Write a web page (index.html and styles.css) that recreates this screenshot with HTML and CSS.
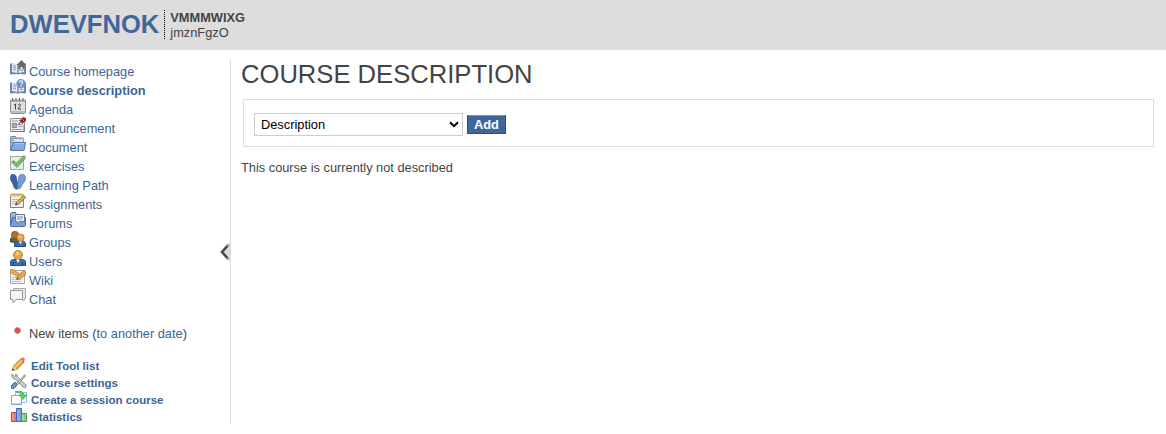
FILE: index.html
```html
<!DOCTYPE html>
<html lang="en">
<head>
<meta charset="utf-8">
<title>Course description</title>
<link rel="stylesheet" href="styles.css">
</head>
<body>
<header class="banner">
  <a class="site">DWEVFNOK</a>
  <div class="course"><b>VMMMWIXG</b><span>jmznFgzO</span></div>
</header>
<div class="page">
  <aside class="sidebar">
    <ul class="tools">
      <li><svg viewBox="0 0 16 16"><path d="M0 3.500h1.500l6 1 7-1H16v11l-7-.5-1 1-1-1-7 .5z" fill="#6b86b2"/><path d="M2 3l5.300 1.500V13L2 12zM8.700 4.500L14 3v9l-5.300 1z" fill="#e6ebf4"/><path d="M3 5.500l3 .5M3 7.500l3 .5M3 9.500l3 .5M10 10.500h3" stroke="#8a99b3"/><path d="M6.500 5L11.500 0 16 5h-1.500v4.500h-2V7h-2v2.500h-2V5z" fill="#686868"/></svg><a>Course homepage</a></li>
      <li class="active"><svg viewBox="0 0 16 16"><path d="M0 3.500h1.500l6 1 7-1H16v11l-7-.5-1 1-1-1-7 .5z" fill="#6b86b2"/><path d="M2 3l5.300 1.500V13L2 12zM8.700 4.500L14 3v9l-5.300 1z" fill="#e6ebf4"/><path d="M3 5.500l3 .5M3 7.500l3 .5M3 9.500l3 .5M10 10.500h3" stroke="#8a99b3"/><circle cx="11" cy="4.700" r="4.700" fill="#6f93c8"/><path d="M9.300 3.300Q9.500 1.800 11 1.800T12.700 3.300Q12.500 4.300 11 5M11 6.300v1.500" fill="none" stroke="#f2f6fc" stroke-width="1.200"/></svg><a>Course description</a></li>
      <li><svg viewBox="0 0 16 16"><path d="M.5 2h15v12.500l-1 1h-13l-1-1z" fill="#dedede" stroke="#8e8e8e"/><path d="M1 2.500h14v1.500H1z" fill="#aaa"/><path d="M1 14h14" stroke="#999"/><path d="M2.500 0v3M6 0v3M9.500 0v3M13 0v3" stroke="#666"/><path d="M4 7l1.500-1v5.500M8 7q1.500-2 2.500-.3 0 1-2.500 4.300H11" fill="none" stroke="#444"/></svg><a>Agenda</a></li>
      <li><svg viewBox="0 0 16 16"><path d="M.5 1.500h14v13H.500z" fill="#eee" stroke="#929292"/><path d="M1 14.500h13V8" fill="none" stroke="#777"/><path d="M2 4h6M2 12.500h10M8.500 7.500h4M8.500 9.500h4" stroke="#999"/><path d="M2.500 6.500h4v4h-4z" fill="#aaa" stroke="#888"/><path d="M8 8l3-3.500" stroke="#444"/><path d="M9 3l2-.5L13 0l3 1v3l-2 1-1.500 2z" fill="#a51f29"/><path d="M12 2l2 2" stroke="#e0656c"/></svg><a>Announcement</a></li>
      <li><svg viewBox="0 0 16 16"><path d="M.5 14V1l1-.5h4l1 1.500h6.500v3" fill="#b3b8c1" stroke="#78859a"/><path d="M3 2.500h10.500v6H3z" fill="#dde2e9" stroke="#929eae"/><path d="M3.500 6.500h12l-1.500 8H.700z" fill="#86abdc" stroke="#4d76b0"/><path d="M4.500 7.500H14" stroke="#acc9ec"/></svg><a>Document</a></li>
      <li><svg viewBox="0 0 16 16"><path d="M.5 1.500h13v13H.500z" fill="#ececec" stroke="#a4a4a4"/><path d="M1.500 7l2-1.500 3 2.500L14 .5l2 2L7 12.500z" fill="#79bd6e" stroke="#509e4b" stroke-width=".8"/></svg><a>Exercises</a></li>
      <li><svg viewBox="0 0 16 16"><path d="M1 1C3-.5 6 .5 6.500 4l1.500 8q0 4-2.300 3.200Q3.500 14 3 10-1 5 1 1z" fill="#3d649e" stroke="#29538c" stroke-width=".7"/><path d="M10 1c3-2 6 0 5.500 4-.5 3-3 4-4 7-.5 2-2 3.500-3.500 2.500-1-1 0-4 .5-7C8.500 4 8.500 2 10 1z" fill="#759ed2" stroke="#4a73ab" stroke-width=".7"/></svg><a>Learning Path</a></li>
      <li><svg viewBox="0 0 16 16"><path d="M.5 1.500h13v13H.500z" fill="#f1f1f1" stroke="#808080"/><path d="M0 1h14v2.500H0z" fill="#dfc55f"/><path d="M2 0v2M4 0v2M6 0v2M8 0v2M10 0v2M12 0v2" stroke="#927d3b" stroke-width=".6"/><path d="M2 6.500h7M2 8.500h5M2 10.500h4" stroke="#bbb"/><path d="M5.500 12l1-3L14 2.500l1.800 2L8.500 11z" fill="#dfb45a" stroke="#76551f" stroke-width=".8"/><path d="M5.500 12l.7-2 1.200 1.300z" fill="#333"/></svg><a>Assignments</a></li>
      <li><svg viewBox="0 0 16 16"><path d="M.5 14V1.500l1-1h4l1 2h8v10" fill="#9db8df" stroke="#586f93"/><path d="M.5 13.500l2-8h13v8l-1 1H1z" fill="#799fd3" stroke="#4b6a9b"/><path d="M5.500 2.500h9v7H10l-3 2v-2H5.500z" fill="#e8edf5" stroke="#667a99"/><path d="M7 5h6M7 7h5" stroke="#7a8fae"/></svg><a>Forums</a></li>
      <li><svg viewBox="0 0 16 16"><path d="M.5 11V8l2-2h6l2 2v3.500z" fill="#536b45" stroke="#4b3e25"/><circle cx="5" cy="4" r="3.700" fill="#b0702c" stroke="#84501c" stroke-width=".7"/><path d="M4.500 15.500V12l2-2h7l2 2v3.500z" fill="#396cb0" stroke="#29457a"/><circle cx="10.500" cy="6.800" r="3.700" fill="#e6a351" stroke="#aa6826" stroke-width=".7"/><path d="M9 10.500h3l-1.500 3z" fill="#eef3fa"/><circle cx="10" cy="5.500" r="1.500" fill="#f8c681"/></svg><a>Groups</a></li>
      <li><svg viewBox="0 0 16 16"><path d="M.5 15.500v-4q.5-2 3-2h9q2.500 0 3 2v4z" fill="#3c6fb5" stroke="#294c84"/><path d="M3.500 12v3.500M12.500 12v3.500" stroke="#24457b"/><circle cx="8" cy="5" r="4.500" fill="#e6a24c" stroke="#ad6c27" stroke-width=".8"/><path d="M6 9.500h4L8 13z" fill="#f8faff"/><circle cx="7.500" cy="3.500" r="2" fill="#f7c680"/></svg><a>Users</a></li>
      <li><svg viewBox="0 0 16 16"><path d="M.5 1.500h14v13H.500z" fill="#f1f1f1" stroke="#a6a6a6"/><path d="M2 8.500h5M2 10.500h10M2 12.500h9" stroke="#c4c4c4"/><path d="M0 .8L2 0l6.500 4 .5 3.500L5.500 6.500 0 3z" fill="#e9ae53" stroke="#b87829" stroke-width=".7"/><path d="M6.500 10.500l1.500-4L14 1.500 16 3v2.500L9.500 10z" fill="#e9a548" stroke="#a76b24" stroke-width=".7"/><path d="M6.500 10.500l.7-2 1.200 1.200z" fill="#333"/></svg><a>Wiki</a></li>
      <li><svg viewBox="0 0 16 16"><path d="M3.500.5h12v10h-1l-.5 2.500-3-2.500H3.500z" fill="#e8e8e8" stroke="#aaa"/><path d="M.5 2.500h12v9H6l-3 3.500v-3.500H.500z" fill="#f5f5f5" stroke="#999"/></svg><a>Chat</a></li>
    </ul>
    <p class="new-items"><i class="dot"></i><span>New items (<a>to another date</a>)</span></p>
    <ul class="manage">
      <li><svg viewBox="0 0 16 16"><path d="M1 13.500L2.500 9 9.500 2l3.500 3-7 7.500z" fill="#efa640" stroke="#a26728" stroke-width=".8"/><path d="M4 10l7-7" stroke="#ffd387" stroke-width="1.300"/><path d="M9.500 2L11 .7q2-.7 3 2L12.500 5z" fill="#d97560"/><path d="M1 13.500L2.500 9 6 12.500z" fill="#e9cda5"/><path d="M1 13.500l.8-2 1.500 1.200z" fill="#333"/></svg><a>Edit Tool list</a></li>
      <li><svg viewBox="0 0 16 16"><path d="M1 0l2.500 2.500L5 1 4-.5Q7 0 7 3.500L15 11q1 2-1 3-1 .5-2-1L4.500 5.500Q0 5 1 0z" fill="#c8c8c8" stroke="#858585" stroke-width=".8"/><path d="M14.500 1L6 10" stroke="#858585" stroke-width="2.200"/><path d="M14.500 1L6 10" stroke="#ddd"/><path d="M0 12l4-4 2.500 2.500L3 14.500Q-.5 15.500 0 12z" fill="#7890b2" stroke="#4d688f"/></svg><a>Course settings</a></li>
      <li><svg viewBox="0 0 16 16"><path d="M4.500 1.500h11v10h-11z" fill="#f3f8ff" stroke="#8fbaf0"/><path d="M.5 4.500h10v9H.500z" fill="#fff" stroke="#77a9e4"/><path d="M1 12.500h9" stroke="#c2dbf6"/><path d="M4 .5q8-2 9.500 3.500H16l-4 4.500L8 4h2.500Q8.500 1 4 .5z" fill="#66ca50" stroke="#3aa42d" stroke-width=".5"/></svg><a>Create a session course</a></li>
      <li><svg viewBox="0 0 16 16"><path d="M.5 4.500h5v9h-5z" fill="#e17b79" stroke="#b94c4e"/><path d="M5.500.5h5v13h-5z" fill="#729fdf" stroke="#3968ad"/><path d="M10.500 5.500h5v8h-5z" fill="#8bcb83" stroke="#4d9648"/><path d="M2 6v7M7 2v11M12 7v6" stroke="#fff" stroke-opacity=".4"/></svg><a>Statistics</a></li>
    </ul>
    <svg class="toggle" viewBox="0 0 11 20"><path d="M11 0v20L1 10z" fill="#ddd"/><path d="M9.500 2.500L3 10l6.500 7.500" fill="none" stroke="#aaa" stroke-width="3"/><path d="M8.500 4L3 10l5.500 6" fill="none" stroke="#444" stroke-width="2"/></svg>
  </aside>
  <main class="content">
    <h1>COURSE DESCRIPTION</h1>
    <form class="add-form">
      <div class="picker"><select><option>Description</option></select><svg viewBox="0 0 10 7"><path d="M1 1.200l4 4 4-4" fill="none" stroke="#000" stroke-width="2"/></svg></div>
      <button type="button">Add</button>
    </form>
    <p class="message">This course is currently not described</p>
  </main>
</div>
</body>
</html>
```
FILE: styles.css
```css
* { box-sizing: border-box; }
body { margin: 0; background: #fff; color: #444; font: 12.8px/15px "Liberation Sans", Arial, sans-serif; overflow: hidden; }
a { color: #3d6594; }
ul { list-style: none; margin: 0; padding: 0; }
p { margin: 0; }
.banner { display: flex; height: 50px; padding: 10px; background: #ddd; }
.banner .site { font-size: 25.6px; line-height: 28px; font-weight: bold; color: #41679a; }
.course { display: flex; flex-direction: column; height: 29px; margin-left: 5px; padding-left: 5px; border-left: 1px dotted #000; }
.page { display: flex; padding-top: 10px; }
.sidebar { position: relative; width: 231px; height: 364px; padding-left: 10px; border-right: 1px solid #ddd; }
.sidebar svg { flex: none; width: 16px; height: 16px; }
.tools li { display: flex; height: 19px; gap: 3px; }
.tools a { padding-top: 4px; }
.active { font-weight: bold; }
.new-items { display: flex; gap: 8px; padding: 19px 0 0 4px; }
.dot { width: 7px; height: 7px; margin-top: 1px; border: 1px solid #d88; border-radius: 50%; background: #d34f50; }
.manage { padding-top: 16px; font-size: 11.52px; font-weight: bold; }
.manage li { display: flex; height: 17px; gap: 4px; padding-left: 1px; }
.manage a { padding-top: 2px; }
.sidebar .toggle { position: absolute; right: 0; top: 182px; width: 11px; height: 20px; }
.content { flex: 1; padding: 0 12px 0 10px; }
h1 { margin: 0; font-size: 25.6px; font-weight: normal; line-height: 29px; }
.add-form { display: flex; align-items: center; gap: 4px; height: 48px; margin: 10px 0 0 2px; padding-left: 10px; border: 1px solid #ddd; }
.picker { display: grid; width: 209px; height: 23px; margin-top: 2px; }
.picker select, .picker svg { grid-area: 1 / 1; }
.picker select { appearance: none; width: 209px; height: 23px; padding: 0 6px; border: 1px solid #ccc; border-radius: 0; background: #fff; color: #000; font: 12.8px "Liberation Sans", Arial, sans-serif; }
.picker svg { width: 10px; height: 7px; align-self: center; justify-self: end; margin-right: 4px; pointer-events: none; }
button { width: 39px; height: 19px; margin-top: 2px; padding: 0; border: 1px solid #284d78; border-top-color: #7594b9; background: #41679a; color: #fff; font: bold 12.8px/15px "Liberation Sans", Arial, sans-serif; }
.message { padding-top: 13px; }
```
